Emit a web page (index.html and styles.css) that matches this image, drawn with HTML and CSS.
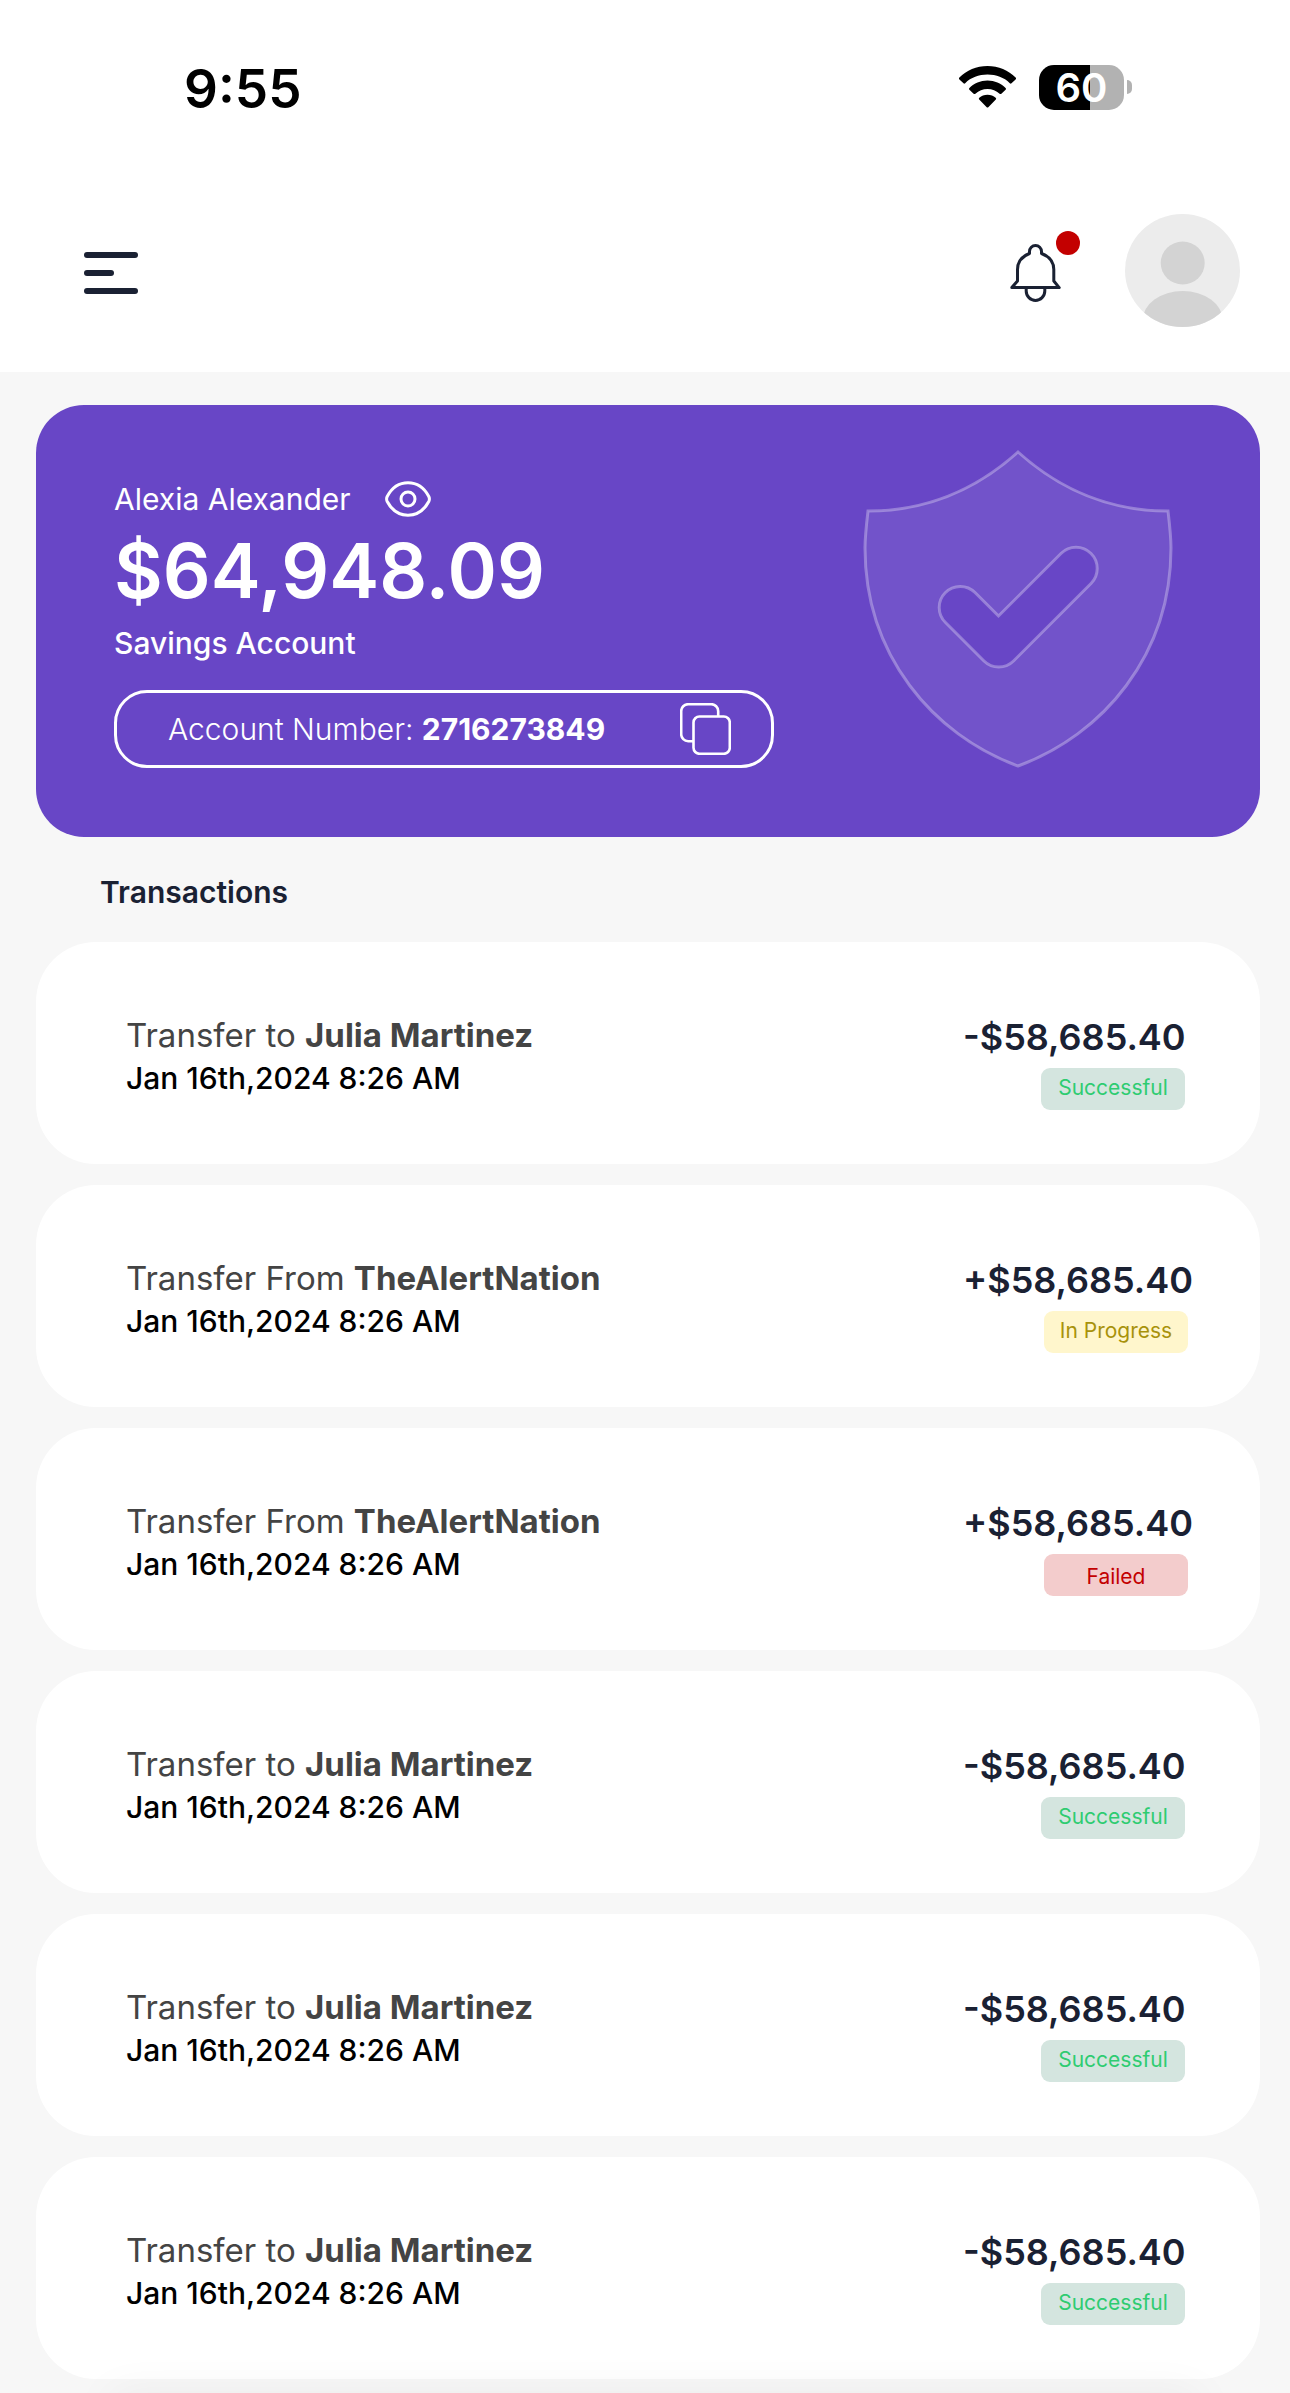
FILE: index.html
```html
<!DOCTYPE html>
<html lang="en">
<head>
    <meta charset="UTF-8">
    <meta name="viewport" content="width=device-width, initial-scale=1.0">
    <title>Transactions</title>
    <link rel="stylesheet" href="styles.css">
</head>

<body>

    <div class="status-bar">
        <span class="clock">9:55</span>
        <div class="status-icons">
            <svg class="wifi" width="57" height="42" viewBox="0 0 57 42">
                <path d="M28.500 0C39.500 0 49.500 4.300 56.600 11.500Q57.500 12.500 56.600 13.400L52.500 17.300Q51.700 18.100 50.800 17.200C45 11.500 37.300 8.600 28.500 8.600S12 11.500 6.200 17.200Q5.300 18.100 4.500 17.300L.4 13.400Q-.5 12.500 .4 11.500C7.500 4.300 17.500 0 28.500 0z" />
                <path d="M28.500 14.500C35.700 14.500 41.700 17.300 46.600 21.900Q47.500 22.800 46.600 23.700L42.400 27.700Q41.500 28.500 40.600 27.700C37.200 24.600 33.200 23 28.500 23S19.800 24.600 16.400 27.700Q15.500 28.500 14.600 27.700L10.400 23.700Q9.500 22.800 10.400 21.900C15.300 17.300 21.300 14.500 28.500 14.500z" />
                <path d="M28.500 28.800C31.800 28.800 34.500 30 36.700 31.700Q37.700 32.600 36.800 33.500L29.300 41.200Q28.500 42 27.700 41.200L20.200 33.500Q19.300 32.600 20.300 31.700C22.500 30 25.200 28.800 28.500 28.800z" />
            </svg>
            <div class="battery"><span class="battery-level">60</span></div>
        </div>
    </div>

    <header class="top-bar">
        <button class="icon-btn lowered" type="button" aria-label="Menu">
            <svg width="54" height="42" viewBox="0 0 54 42">
                <g fill="#1a2133">
                    <rect x="0" y="0" width="54" height="6" rx="3" />
                    <rect x="0" y="18" width="30" height="6" rx="3" />
                    <rect x="0" y="36" width="54" height="6" rx="3" />
                </g>
            </svg>
        </button>
        <div class="top-actions">
            <button class="icon-btn lowered" type="button" aria-label="Notifications">
                <svg width="51" height="58" viewBox="0 0 51 58" fill="none" stroke="#1a2133" stroke-width="3" stroke-linejoin="round">
                    <path d="M19.500 9.500V7.500a6 6 0 0 1 12 0v2C39.500 12.500 43.800 18.500 43.800 25.500V37L49.200 43.600H1.800L7.500 37V25.500C7.500 18.500 11.500 12.500 19.500 9.500z" />
                    <path d="M16.200 43.600v3.500a9.300 9.300 0 0 0 18.600 0v-3.500" />
                </svg>
                <span class="bell-dot"></span>
            </button>
            <button class="icon-btn" type="button" aria-label="Profile">
                <svg width="115" height="113" viewBox="0 0 115 113">
                    <clipPath id="avatar-clip"><ellipse cx="57.500" cy="56.500" rx="57.500" ry="56.500" /></clipPath>
                    <g clip-path="url(#avatar-clip)">
                        <rect width="115" height="113" fill="#ececec" />
                        <ellipse cx="57.700" cy="49" rx="22" ry="21.500" fill="#d3d3d3" />
                        <ellipse cx="57.700" cy="106" rx="40" ry="29" fill="#d3d3d3" />
                    </g>
                </svg>
            </button>
        </div>
    </header>

    <main class="content">
        <section class="account-card">
            <div class="account-info">
                <div class="owner">
                    <span>Alexia Alexander</span>
                    <button class="icon-btn" type="button" aria-label="Hide balance">
                        <svg width="46" height="36" viewBox="0 0 46 36" fill="none" stroke="#fff" stroke-width="3">
                            <path d="M2.200 15.500C7 6.500 14.500 1.800 23 1.800S39 6.500 43.800 15.500Q45 18 43.800 20.500C39 29.500 31.500 34.200 23 34.200S7 29.500 2.200 20.500Q1 18 2.200 15.500z" />
                            <circle cx="23" cy="18" r="7" />
                        </svg>
                    </button>
                </div>
                <div class="balance">$64,948.09</div>
                <div class="account-type">Savings Account</div>
                <div class="account-number">
                    <span>Account Number: <b>2716273849</b></span>
                    <button class="icon-btn" type="button" aria-label="Copy account number">
                        <svg width="51" height="52" viewBox="0 0 51 52" fill="none" stroke="#fff" stroke-width="2.600">
                            <path d="M13.500 38.200H8.200a7 7 0 0 1-7-7V8.200a7 7 0 0 1 7-7h23a7 7 0 0 1 7 7v5.300" />
                            <rect x="13.500" y="13.500" width="36.300" height="37.300" rx="6" />
                        </svg>
                    </button>
                </div>
            </div>
            <svg class="shield" width="310" height="318" viewBox="0 0 310 318">
                <path fill-rule="evenodd" d="M155 2C195 38 245 61 305 61C307 78 308 88 308 98C308 205 240 285 155 316C70 285 2 205 2 98C2 88 3 78 5 61C65 61 115 38 155 2zM135.500 166L112 142.500A21 21 0 0 0 82.500 172.500L121 211A21 21 0 0 0 150.500 211L228 133.500A21 21 0 0 0 198 103.500z" />
            </svg>
        </section>

        <h1 class="section-title">Transactions</h1>

        <ul class="transactions">
            <li class="transaction">
                <div class="details">
                    <p class="party">Transfer to <b>Julia Martinez</b></p>
                    <p class="date">Jan 16th,2024 8:26 AM</p>
                </div>
                <div class="figures">
                    <p class="amount">-$58,685.40</p>
                    <span class="status successful">Successful</span>
                </div>
            </li>
            <li class="transaction">
                <div class="details">
                    <p class="party">Transfer From <b>TheAlertNation</b></p>
                    <p class="date">Jan 16th,2024 8:26 AM</p>
                </div>
                <div class="figures">
                    <p class="amount">+$58,685.40</p>
                    <span class="status progress">In Progress</span>
                </div>
            </li>
            <li class="transaction">
                <div class="details">
                    <p class="party">Transfer From <b>TheAlertNation</b></p>
                    <p class="date">Jan 16th,2024 8:26 AM</p>
                </div>
                <div class="figures">
                    <p class="amount">+$58,685.40</p>
                    <span class="status failed">Failed</span>
                </div>
            </li>
            <li class="transaction">
                <div class="details">
                    <p class="party">Transfer to <b>Julia Martinez</b></p>
                    <p class="date">Jan 16th,2024 8:26 AM</p>
                </div>
                <div class="figures">
                    <p class="amount">-$58,685.40</p>
                    <span class="status successful">Successful</span>
                </div>
            </li>
            <li class="transaction">
                <div class="details">
                    <p class="party">Transfer to <b>Julia Martinez</b></p>
                    <p class="date">Jan 16th,2024 8:26 AM</p>
                </div>
                <div class="figures">
                    <p class="amount">-$58,685.40</p>
                    <span class="status successful">Successful</span>
                </div>
            </li>
            <li class="transaction">
                <div class="details">
                    <p class="party">Transfer to <b>Julia Martinez</b></p>
                    <p class="date">Jan 16th,2024 8:26 AM</p>
                </div>
                <div class="figures">
                    <p class="amount">-$58,685.40</p>
                    <span class="status successful">Successful</span>
                </div>
            </li>
        </ul>
    </main>

    <div class="bottom-shade"></div>

</body>

</html>
```

FILE: styles.css
```css
* {
    box-sizing: border-box;
}

body {
    margin: 0;
    background: #f7f7f7;
    color: #1a2133;
    font-family: Inter, "Liberation Sans", sans-serif;
    font-size: 30px;
    line-height: 42px;
}

p, h1, ul {
    margin: 0;
    padding: 0;
}

svg {
    display: block;
}

.icon-btn {
    position: relative;
    padding: 0;
    border: none;
    background: none;
    cursor: pointer;
}

/* status bar */
.status-bar {
    display: flex;
    align-items: center;
    justify-content: space-between;
    height: 174px;
    padding: 0 158px 0 184px;
    background: #fff;
}

.clock {
    padding-top: 3px;
    color: #000;
    font-size: 53px;
    font-weight: 600;
}

.status-icons {
    display: flex;
    align-items: center;
    gap: 23px;
}

.battery {
    display: flex;
    align-items: center;
    gap: 3px;
}

.battery-level {
    width: 85px;
    border-radius: 15px;
    background: linear-gradient(to right, #000 60%, #b2b2b2 60%);
    color: #fff;
    font-size: 40px;
    font-weight: 600;
    line-height: 45px;
    text-align: center;
}

.battery::after {
    content: "";
    width: 5px;
    height: 14px;
    border-radius: 0 5px 5px 0;
    background: #b2b2b2;
}

/* top bar */
.top-bar {
    display: flex;
    align-items: center;
    justify-content: space-between;
    height: 198px;
    padding: 0 50px 6px 84px;
    background: #fff;
}

.lowered {
    padding-top: 6px;
}

.top-actions {
    display: flex;
    align-items: center;
    gap: 64px;
}

.bell-dot {
    position: absolute;
    top: -7px;
    right: -19px;
    width: 24px;
    height: 24px;
    border-radius: 50%;
    background: #c30000;
}

/* account card */
.content {
    padding: 33px 30px 14px 36px;
}

.account-card {
    display: flex;
    align-items: flex-start;
    justify-content: space-between;
    padding: 45px 87px 69px 78px;
    border-radius: 48px;
    background: #6846c6;
    color: #fff;
}

.account-info {
    width: 660px;
    padding-top: 28px;
}

.owner {
    display: flex;
    align-items: center;
    gap: 34px;
}

.balance {
    font-size: 75px;
    font-weight: 600;
    line-height: 102px;
}

.account-type {
    font-weight: 500;
}

.account-number {
    display: flex;
    align-items: center;
    justify-content: space-between;
    height: 78px;
    margin-top: 26px;
    padding: 0 40px 0 51px;
    border: 3px solid #fff;
    border-radius: 33px;
    font-weight: 300;
}

.account-number b {
    font-weight: 700;
}

.shield {
    fill: rgba(255, 255, 255, 0.07);
    stroke: rgba(255, 255, 255, 0.3);
    stroke-width: 3px;
}

/* transactions */
.section-title {
    padding: 34px 64px 29px;
    font-size: 30px;
    font-weight: 600;
}

.transactions {
    display: flex;
    flex-direction: column;
    gap: 21px;
    list-style: none;
}

.transaction {
    display: flex;
    justify-content: space-between;
    padding: 72px 66px 54px 90px;
    border-radius: 60px;
    background: #fff;
}

.party {
    margin-bottom: 1px;
    color: #444;
    font-size: 33px;
}

.party b {
    font-weight: 700;
}

.date {
    color: #000;
    font-weight: 500;
}

.figures {
    width: 231px;
}

.amount {
    font-size: 36px;
    font-weight: 600;
    line-height: 46px;
}

.status {
    display: block;
    width: 144px;
    height: 42px;
    margin: 8px 0 0 81px;
    border-radius: 9px;
    font-size: 21px;
    line-height: 39px;
    text-align: center;
}

.successful {
    margin-left: 78px;
    background: #d4e5df;
    color: #2ecc71;
}

.progress {
    background: #fff6cc;
    color: #a8920b;
}

.failed {
    background: #f3cccc;
    color: #c30000;
    line-height: 45px;
}

/* shadow cast upwards from under the bottom edge */
.bottom-shade {
    position: fixed;
    right: 90px;
    bottom: -45px;
    left: 110px;
    height: 45px;
    box-shadow: 0 0 45px rgba(0, 0, 0, 0.05);
}
```
